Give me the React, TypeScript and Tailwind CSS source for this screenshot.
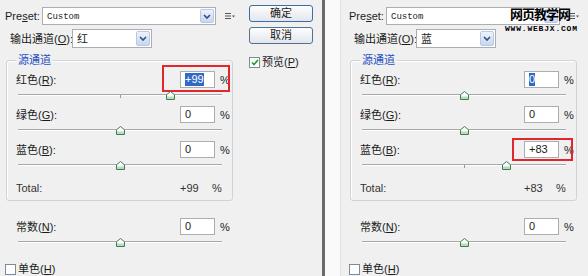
import React from 'react';

type Row = {
  name: string;
  hotkey: string;
  value: string;
  pos: number;
  selected?: boolean;
  box?: string;
};

type DialogProps = {
  channel: string;
  rows: Row[];
  total: string;
  buttons?: boolean;
};

const leftRows: Row[] = [
  { name: '红色', hotkey: 'R', value: '+99', pos: 99, selected: true, box: 'left-[146px] -top-[6px] w-[68px] h-[27px]' },
  { name: '绿色', hotkey: 'G', value: '0', pos: 0 },
  { name: '蓝色', hotkey: 'B', value: '0', pos: 0 },
];

const rightRows: Row[] = [
  { name: '红色', hotkey: 'R', value: '0', pos: 0, selected: true },
  { name: '绿色', hotkey: 'G', value: '0', pos: 0 },
  { name: '蓝色', hotkey: 'B', value: '+83', pos: 83, box: 'left-[152px] -top-[3px] w-[61px] h-[23px]' },
];

function Chevron() {
  return (
    <svg width="8" height="5" viewBox="0 0 8 5">
      <path d="M1 1 L4 4 L7 1" fill="none" stroke="#2f4f80" strokeWidth="1.6" />
    </svg>
  );
}

function Select({ width, children }: { width: string; children: React.ReactNode }) {
  return (
    <div className={`flex h-full shrink-0 items-center border border-[#abadb3] bg-white ${width}`}>
      <div className="flex-1 overflow-hidden whitespace-nowrap pl-[4px]">{children}</div>
      <div className="mr-px flex h-[calc(100%-2px)] w-[14px] items-center justify-center rounded-[2px] border border-[#b8c9e3] bg-gradient-to-b from-[#eef3fd] to-[#c7d6f1]">
        <Chevron />
      </div>
    </div>
  );
}

function PresetIcon() {
  return (
    <svg width="10" height="8" viewBox="0 0 10 8" className="ml-[9px] shrink-0">
      <path d="M0 1.5 H6 M0 4 H6 M0 6.5 H6" stroke="#555" strokeWidth="1" />
      <path d="M7 3.5 L10 3.5 L8.5 5.5 Z" fill="#555" />
    </svg>
  );
}

function Slider({ value }: { value: number }) {
  const left = ((value + 200) / 400) * 204 - 4.5;
  return (
    <div className="relative ml-[2px] mt-[2px] h-[10px] w-[204px]">
      <div className="absolute left-0 right-0 top-[4px] h-px bg-[#a7a7a7]" />
      <div className="absolute left-0 right-0 top-[5px] h-px bg-white" />
      <div className="absolute left-[102px] top-[5px] h-[3px] w-px bg-[#9a9a9a]" />
      <svg width="9" height="9" viewBox="0 0 9 9" className="absolute top-[1px]" style={{ left }}>
        <path d="M4.5 0.5 L8.5 3.8 V8.5 H0.5 V3.8 Z" fill="#fbfdfb" stroke="#3f7d52" />
        <rect x="1" y="5.5" width="7" height="2.5" fill="#b9dcc0" />
      </svg>
    </div>
  );
}

function ValueRow({ row, top }: { row: Row; top: string }) {
  return (
    <div className={`relative flex h-[17px] items-center ${top}`}>
      <span className="w-[164px] whitespace-nowrap">
        {row.name}(<u>{row.hotkey}</u>):
      </span>
      <div className="flex h-[17px] w-[35px] items-center border border-[#abadb3] bg-white pl-[4px]">
        <span className={row.selected ? 'bg-[#3169c6] leading-[13px] text-white' : 'leading-[13px]'}>{row.value}</span>
      </div>
      <span className="ml-[5px]">%</span>
      {row.box && <div className={`absolute border-2 border-[#e1262c] ${row.box}`} />}
    </div>
  );
}

function Checkbox({ checked }: { checked?: boolean }) {
  return (
    <div className="flex h-[11px] w-[11px] items-center justify-center border border-[#7c8a99] bg-white">
      {checked && (
        <svg width="8" height="7" viewBox="0 0 8 7">
          <path d="M1 3.5 L3 5.5 L7 1" fill="none" stroke="#21a121" strokeWidth="1.7" />
        </svg>
      )}
    </div>
  );
}

function Dialog({ channel, rows, total, buttons }: DialogProps) {
  return (
    <div className="flex w-[322px] shrink-0">
      <div className="flex w-[244px] shrink-0 flex-col">
        {/* Preset */}
        <div className="mt-[7px] flex h-[18px] items-center">
          <span className="ml-[5px] w-[37px] shrink-0">
            Pre<u>s</u>et:
          </span>
          <Select width="w-[174px]">
            <span className="font-['Liberation_Mono',monospace] text-[9px]">Custom</span>
          </Select>
          <PresetIcon />
        </div>

        {/* Output channel */}
        <div className="mt-[4px] flex h-[19px] items-center">
          <span className="ml-[10px] w-[62px] shrink-0 whitespace-nowrap">
            输出通道(<u>O</u>):
          </span>
          <Select width="w-[80px]">{channel}</Select>
        </div>

        {/* Source channels */}
        <div className="relative ml-[6px] mt-[12px] h-[141px] w-[227px] rounded-[3px] border border-[#cdd3d8] shadow-[inset_1px_1px_0_#ffffff]">
          <span className="absolute -top-[8px] left-[9px] bg-[#f0f0f0] px-[2px] leading-[14px] text-[#1f4fc4]">源通道</span>
          <div className="pl-[9px] pt-[10px]">
            {rows.map((row, i) => (
              <div key={row.hotkey}>
                <ValueRow row={row} top={i === 0 ? 'mt-0' : 'mt-[6px]'} />
                <Slider value={row.pos} />
              </div>
            ))}
            <div className="mt-[11px] flex h-[14px] items-center text-[#333]">
              <span className="w-[164px]">Total:</span>
              <span className="w-[32px]">{total}</span>
              <span>%</span>
            </div>
          </div>
        </div>

        {/* Constant */}
        <div className="ml-[16px] mt-[17px]">
          <ValueRow row={{ name: '常数', hotkey: 'N', value: '0', pos: 0 }} top="mt-0" />
          <Slider value={0} />
        </div>

        <div className="ml-[5px] mt-[15px] flex items-center gap-[2px]">
          <Checkbox />
          <span>
            单色(<u>H</u>)
          </span>
        </div>
      </div>

      {/* Buttons */}
      {buttons && (
        <div className="ml-[5px] flex w-[64px] shrink-0 flex-col">
          <button className="mt-[5px] h-[17px] w-[64px] rounded-[3px] border border-[#3c6da4] bg-gradient-to-b from-[#fdfdfd] to-[#e2e6ec] leading-none">
            确定
          </button>
          <button className="mt-[5px] h-[17px] w-[64px] rounded-[3px] border border-[#56708f] bg-gradient-to-b from-[#fdfdfd] to-[#e2e6ec] leading-none">
            取消
          </button>
          <div className="mt-[11px] flex items-center gap-[2px] whitespace-nowrap">
            <Checkbox checked />
            <span>
              预览(<u>P</u>)
            </span>
          </div>
        </div>
      )}
    </div>
  );
}

export default function App() {
  return (
    <div className="relative flex h-[276px] w-[588px] overflow-hidden bg-[#f0f0f0] font-['Liberation_Sans','Noto_Sans_CJK_SC',sans-serif] text-[11px] leading-[14px] text-[#1b1b1b]">
      <div className="w-[322px] shrink-0 overflow-hidden">
        <Dialog channel="红" rows={leftRows} total="+99" buttons />
      </div>
      <div className="w-[3px] shrink-0 bg-[#6b6b6b]" />
      <div className="w-[15px] shrink-0 bg-[#fafafa]" />
      <div className="min-w-0 flex-1 overflow-hidden border-l border-[#e2e2e2] pl-[3px]">
        <Dialog channel="蓝" rows={rightRows} total="+83" />
      </div>

      {/* Watermark */}
      <div className="absolute left-[510px] top-[6px] flex flex-col items-start">
        <span className="font-['Noto_Sans_CJK_SC',sans-serif] text-[13px] font-bold leading-[16px] tracking-[-1px] text-black">网页教学网</span>
        <span className="-ml-[5px] mt-[3px] font-['Liberation_Mono',monospace] text-[8px] font-bold leading-[7px] tracking-[0.8px] text-black">WWW.WEBJX.COM</span>
      </div>
    </div>
  );
}
